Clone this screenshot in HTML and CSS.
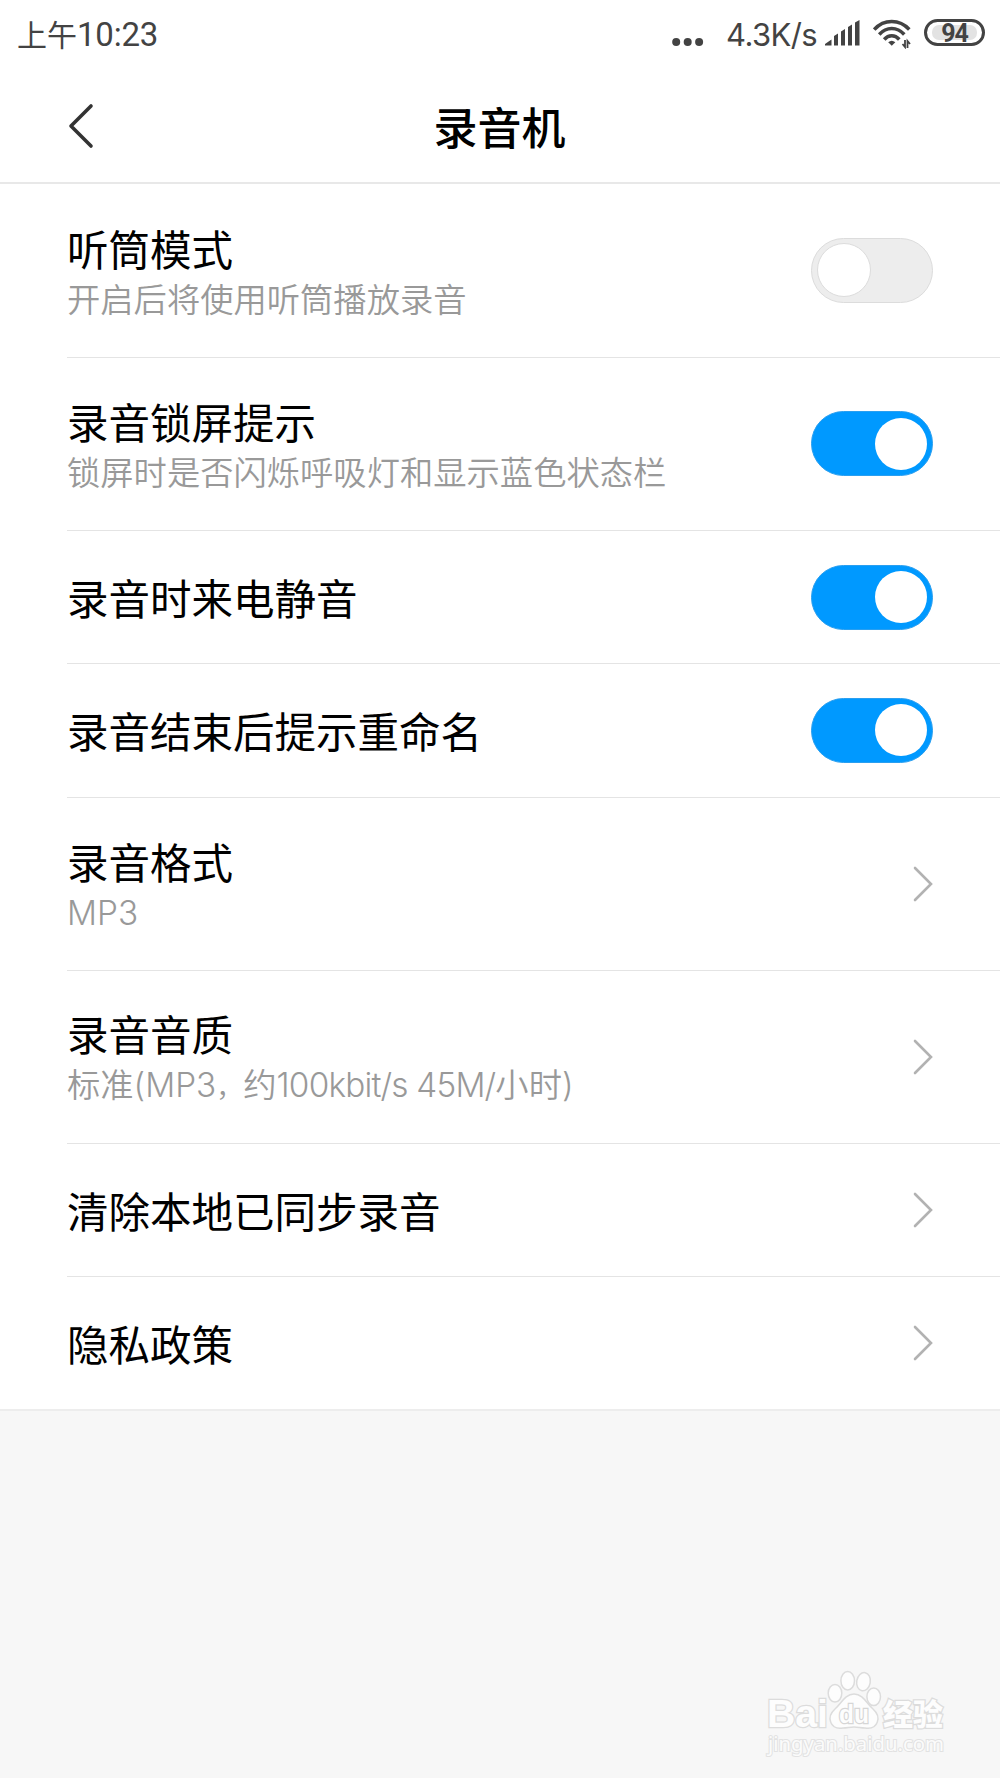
FILE: index.html
```html
<!DOCTYPE html>
<html lang="zh-CN">
<head>
  <meta charset="UTF-8" />
  <meta name="viewport" content="width=device-width, initial-scale=1" />
  <title>录音机</title>
  <link rel="stylesheet" href="styles.css">
</head>
<body>
<div class="status-bar">
  <div class="time">上午<span>10:23</span></div>
  <div class="status-icons">
    <svg class="dots" width="32" height="10" viewBox="0 0 32 10" fill="#434343">
      <circle cx="4.2" cy="5" r="4" /><circle cx="15.7" cy="5" r="4" /><circle cx="27.1" cy="5" r="4" />
    </svg>
    <span class="speed">4.3K/s</span>
    <svg class="signal" width="37" height="28" viewBox="0 0 37 28" fill="#434343">
      <path d="M1 25.5V24L7.5 19.5V25.5ZM10 25.5V16L14 13.5V25.5ZM17 25.5V11.5L21 9V25.5ZM24 25.5V7L28 4.5V25.5ZM31 25.5V2.5L35.5 0V25.5Z" />
    </svg>
    <svg class="wifi" width="38" height="30" viewBox="0 0 38 30" fill="none" stroke="#434343" stroke-width="3.5">
      <path d="M1.2 10.5C11 -.2 26.5 -.2 36.3 10.5" />
      <path d="M6.2 15.5C13.5 7.5 24 7.5 31.3 15.5" />
      <path d="M11.2 20.5C15.5 15.6 22 15.6 26.3 20.5" />
      <path d="M15.2 23.2Q18.75 20.2 22.3 23.2L18.75 26.7Z" fill="#434343" stroke="none" />
      <path d="M32 21V28L29.5 25M34.5 29V22L37 25" stroke-width="1.8" />
    </svg>
    <div class="battery"><span>94</span></div>
  </div>
</div>

<header>
  <a href="#" class="back">
    <svg width="26" height="46" viewBox="0 0 26 46" fill="none" stroke="#333" stroke-width="3.6" stroke-linecap="round" stroke-linejoin="round">
      <path d="M23 3L3 23L23 43" />
    </svg>
  </a>
  <h1>录音机</h1>
</header>

<main>
  <div class="item tall">
    <div class="text">
      <h2>听筒模式</h2>
      <p>开启后将使用听筒播放录音</p>
    </div>
    <div class="switch"></div>
  </div>
  <div class="item tall">
    <div class="text">
      <h2>录音锁屏提示</h2>
      <p>锁屏时是否闪烁呼吸灯和显示蓝色状态栏</p>
    </div>
    <div class="switch on"></div>
  </div>
  <div class="item">
    <div class="text"><h2>录音时来电静音</h2></div>
    <div class="switch on"></div>
  </div>
  <div class="item">
    <div class="text"><h2>录音结束后提示重命名</h2></div>
    <div class="switch on"></div>
  </div>
  <div class="item tall">
    <div class="text">
      <h2>录音格式</h2>
      <p class="latin">MP3</p>
    </div>
    <svg class="arrow" viewBox="0 0 20 36"><path d="M2 2L18 18L2 34" /></svg>
  </div>
  <div class="item tall">
    <div class="text">
      <h2>录音音质</h2>
      <p class="latin">标准(MP3<span class="comma">，</span>约<span class="rate">100kbit/s 45M/</span>小时)</p>
    </div>
    <svg class="arrow" viewBox="0 0 20 36"><path d="M2 2L18 18L2 34" /></svg>
  </div>
  <div class="item">
    <div class="text"><h2>清除本地已同步录音</h2></div>
    <svg class="arrow" viewBox="0 0 20 36"><path d="M2 2L18 18L2 34" /></svg>
  </div>
  <div class="item">
    <div class="text"><h2>隐私政策</h2></div>
    <svg class="arrow" viewBox="0 0 20 36"><path d="M2 2L18 18L2 34" /></svg>
  </div>
</main>

<footer>
  <svg class="watermark" width="184" height="90" viewBox="0 0 184 90">
    <g class="logo">
      <text x="1" y="55.5" font-size="39" textLength="61" lengthAdjust="spacingAndGlyphs">Bai</text>
      <ellipse cx="69" cy="22.3" rx="6.8" ry="8.8" />
      <ellipse cx="81.7" cy="9.7" rx="6.8" ry="9.2" />
      <ellipse cx="97.5" cy="10.7" rx="6.8" ry="9.2" transform="rotate(10 97.5 10.7)" />
      <ellipse cx="107.7" cy="25.7" rx="6.8" ry="8.8" />
      <path d="M88 23C97 23 101 33 107 38C116 46 112 59 99 57C95 57 92 56 88 56C84 56 81 57 77 57C64 59 60 46 69 38C75 33 79 23 88 23Z" />
      <text class="du" x="73" y="51.5" font-size="26" textLength="30" lengthAdjust="spacingAndGlyphs">du</text>
      <text class="cn" x="117" y="53.5" font-size="30">经验</text>
    </g>
    <text class="url" x="2" y="79.5" font-size="19.5" textLength="176" lengthAdjust="spacingAndGlyphs">jingyan.baidu.com</text>
  </svg>
</footer>
</body>
</html>
```
FILE: styles.css
```css
* { margin: 0; padding: 0; box-sizing: border-box; }
body { background: #f7f7f7; color: #000; min-height: 100vh; display: flex; flex-direction: column; font-family: "Noto Sans CJK SC", sans-serif; }

.status-bar { height: 68px; padding: 0 15px 0 17px; background: #fff; color: #434343; display: flex; justify-content: space-between; align-items: flex-start; }
.time { font-size: 30px; line-height: 66px; white-space: nowrap; }
.time span { font-family: Roboto, sans-serif; font-size: 33px; letter-spacing: -0.2px; }
.status-icons { display: flex; align-items: flex-start; }
.dots { margin: 37px 22px 0 0; }
.speed { width: 92px; margin-right: 6px; font-family: Inter, sans-serif; font-size: 31px; line-height: 69px; letter-spacing: -0.6px; white-space: nowrap; }
.signal { margin: 20px 12px 0 0; }
.wifi { margin: 19px 13px 0 0; }
.battery { width: 61px; height: 27px; margin-top: 19px; padding: 3px 5px; border: 3px solid #434343; border-radius: 14px; }
.battery span { display: block; height: 15px; background: #e3e3e3; border-radius: 7px; font: bold 25px/18px Roboto, sans-serif; text-align: center; letter-spacing: -1px; }

header { height: 116.2px; padding: 0 67px; background: #fff; border-bottom: 2px solid #e8e8e8; display: grid; grid-template-columns: 60px 1fr 60px; align-items: center; }
.back { display: flex; padding: 2px 0 0 1px; }
h1 { font-size: 44px; font-weight: 500; line-height: 60px; text-align: center; padding: 1px 1px 0 0; }

main { background: #fff; padding-left: 67px; border-bottom: 2px solid #ededed; }
.item { height: 133.33px; padding-right: 67px; border-bottom: 1.5px solid #e4e4e4; display: flex; align-items: center; justify-content: space-between; }
.item.tall { height: 173.33px; }
.item:last-child { height: 132px; border-bottom: none; }
h2 { font-size: 41.5px; font-weight: 400; line-height: 55px; white-space: nowrap; }
p { font-size: 33.3px; font-weight: 350; line-height: 44px; color: #999; white-space: nowrap; }
.latin { font-family: Inter, "Noto Sans CJK SC", sans-serif; padding-top: 2px; margin-bottom: -2px; }
.comma { font-size: 27px; }
.rate { letter-spacing: -0.8px; }

.switch { width: 122px; height: 65px; padding: 5px; background: #ededed; border: 1px solid #dcdcdc; border-radius: 33px; display: flex; align-items: center; }
.switch::before { content: ""; width: 52px; height: 52px; background: #fff; border: 1px solid #dcdcdc; border-radius: 50%; }
.switch.on { background: #0099ff; border-color: #2a9ff0; justify-content: flex-end; }
.switch.on::before { border: none; }
.arrow { width: 20px; height: 36px; fill: none; stroke: #b2b2b2; stroke-width: 2.6; stroke-linecap: round; }

footer { flex: 1; display: flex; justify-content: flex-end; align-items: flex-end; padding: 0 50px 17px 0; }
.watermark { overflow: visible; font-family: "Liberation Sans", sans-serif; }
.logo { fill: #fdfdfd; stroke: #dcdcdc; stroke-width: 1.5; font-weight: bold; }
.logo text { paint-order: stroke; stroke-width: 2.5; }
.logo .du { fill: #fdfdfd; stroke: #d6d6d6; }
.logo .cn { font-family: "Noto Sans CJK SC", sans-serif; font-weight: 900; }
.url { fill: #fbfbfb; stroke: #e2e2e2; stroke-width: 2; paint-order: stroke; font-family: "Noto Sans", sans-serif; }
```
